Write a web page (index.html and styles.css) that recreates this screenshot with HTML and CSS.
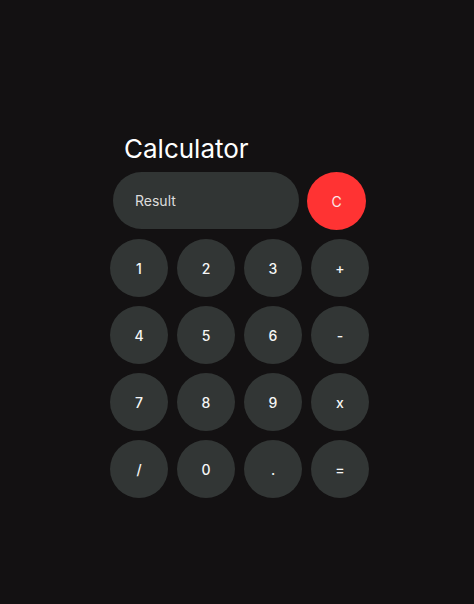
FILE: index.html
```html
<!DOCTYPE html>
<html lang="en">
<head>
<meta charset="utf-8">
<title>Calculator</title>
<link rel="stylesheet" href="styles.css">
</head>
<body>
<main class="page">
  <section class="calc">
    <h1 class="title">Calculator</h1>
    <div class="top-row">
      <div class="display">Result</div>
      <button class="key key-clear">C</button>
    </div>
    <div class="keys">
      <button class="key">1</button>
      <button class="key">2</button>
      <button class="key">3</button>
      <button class="key">+</button>
      <button class="key">4</button>
      <button class="key">5</button>
      <button class="key">6</button>
      <button class="key">-</button>
      <button class="key">7</button>
      <button class="key">8</button>
      <button class="key">9</button>
      <button class="key">x</button>
      <button class="key">/</button>
      <button class="key">0</button>
      <button class="key">.</button>
      <button class="key">=</button>
    </div>
  </section>
</main>
</body>
</html>
```
FILE: styles.css
```css
html, body {
  margin: 0;
  padding: 0;
  background: #131112;
  height: 100%;
}
body {
  font-family: Inter, "Noto Sans", sans-serif;
  color: #f2f2f2;
}
.page {
  display: flex;
  justify-content: center;
  padding: 133px 0 0 5px;
}
.calc {
  width: 259px;
  display: flex;
  flex-direction: column;
}
.title {
  margin: 0 0 8px 14px;
  font-size: 26px;
  font-weight: 400;
  line-height: 31px;
  color: #ffffff;
}
.top-row {
  display: flex;
  gap: 8px;
  padding: 0 3px;
  margin-bottom: 9px;
}
.display {
  width: 186px;
  height: 57px;
  border-radius: 29px;
  background: #313534;
  display: flex;
  align-items: center;
  padding-left: 22px;
  box-sizing: border-box;
  font-size: 14px;
  color: #dcdcdc;
}
.keys {
  display: grid;
  grid-template-columns: repeat(4, 58px);
  gap: 9px;
}
.key {
  width: 58px;
  height: 58px;
  border: none;
  border-radius: 50%;
  background: #323635;
  color: #f6f6f6;
  font-family: Inter, "Noto Sans", sans-serif;
  font-size: 14px;
  font-weight: 500;
  padding: 0;
}
.key-clear {
  width: 59px;
  height: 58px;
  background: #ff3333;
  color: #fbe9e9;
  font-weight: 400;
}
```
